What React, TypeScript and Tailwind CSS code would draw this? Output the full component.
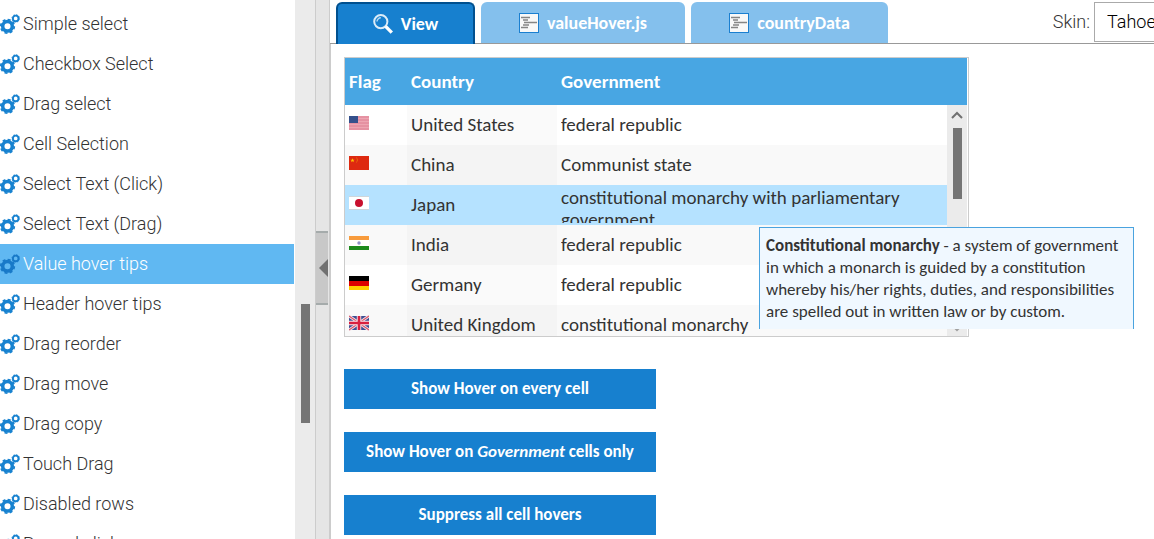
import { clsx } from 'clsx';

const examples = [
  'Simple select',
  'Checkbox Select',
  'Drag select',
  'Cell Selection',
  'Select Text (Click)',
  'Select Text (Drag)',
  'Value hover tips',
  'Header hover tips',
  'Drag reorder',
  'Drag move',
  'Drag copy',
  'Touch Drag',
  'Disabled rows',
  'Record clicks',
];

const countries = [
  { code: 'us', name: 'United States', government: 'federal republic' },
  { code: 'cn', name: 'China', government: 'Communist state' },
  { code: 'jp', name: 'Japan', government: 'constitutional monarchy with parliamentary government' },
  { code: 'in', name: 'India', government: 'federal republic' },
  { code: 'de', name: 'Germany', government: 'federal republic' },
  { code: 'gb', name: 'United Kingdom', government: 'constitutional monarchy' },
];

function GearsIcon({ dim }: { dim?: boolean }) {
  return (
    <svg viewBox="0 0 20 20" className={clsx('h-5 w-5 shrink-0', dim ? 'text-[#1879c8]' : 'text-[#1782d0]')} fill="none" stroke="currentColor" aria-hidden="true">
      <circle cx="7.5" cy="12.3" r="4.8" strokeWidth="3.5" />
      <circle cx="7.5" cy="12.3" r="6.8" strokeWidth="1.7" strokeDasharray="3 2.34" />
      <circle cx="15.7" cy="4.4" r="2.8" strokeWidth="1.9" />
      <circle cx="15.7" cy="4.4" r="3.8" strokeWidth="0.8" strokeDasharray="1.5 1.48" />
    </svg>
  );
}

function SearchIcon() {
  return (
    <svg viewBox="0 0 20 20" className="h-5 w-5" fill="none" stroke="white" aria-hidden="true">
      <circle cx="7.8" cy="7.6" r="6.6" strokeWidth="2" strokeOpacity="0.85" />
      <path d="M4 7.6a3.8 3.8 0 0 1 3.8-3.8" strokeWidth="1.4" strokeOpacity="0.7" />
      <path d="M12.6 12.4l6.2 6.2" strokeWidth="3.4" />
    </svg>
  );
}

function SourceIcon() {
  return (
    <svg viewBox="0 0 20 20" className="h-5 w-5" aria-hidden="true">
      <rect x="0.5" y="0.5" width="19" height="19" fill="#f8f8f8" stroke="#1a7fd0" />
      <path d="M2 4.5h9M4 7h5M5 9.5h13M4 12h6M2 14.5h7" stroke="#858585" strokeWidth="1.4" />
    </svg>
  );
}

function Flag({ code }: { code: string }) {
  return (
    <svg viewBox="0 0 20 16" className="h-4 w-5" role="img" aria-label={code}>
      {code === 'us' && (
        <>
          <rect width="20" height="14" y="1" fill="#eda5b2" />
          <path d="M0 2h20M0 5h20M0 8h20M0 11h20M0 14h20" stroke="#dd7f92" />
          <rect y="1" width="9" height="7" fill="#34508c" />
        </>
      )}
      {code === 'cn' && (
        <>
          <rect width="20" height="14" y="1" fill="#de2910" />
          <path d="M3.5 3.2l.6 1.5h1.5l-1.2 1 .5 1.6-1.4-1-1.4 1 .5-1.6-1.2-1h1.5z" fill="#ffc400" />
          <path d="M7 2.5l1.3 1.2v2.6L7 7.5" fill="none" stroke="#eb7a0c" strokeWidth="0.7" />
        </>
      )}
      {code === 'jp' && (
        <>
          <rect width="20" height="14" y="1" fill="#fff" />
          <path d="M0 1.5h20M0 14.5h20" stroke="#cfd6da" />
          <circle cx="10" cy="8" r="4" fill="#c8102e" />
        </>
      )}
      {code === 'in' && (
        <>
          <rect width="20" height="14" y="1" fill="#fff" />
          <rect width="20" height="4" y="1" fill="#f89b3c" />
          <rect width="20" height="4" y="11" fill="#1d8a1d" />
          <circle cx="10" cy="8" r="1.7" fill="#8f91c9" />
        </>
      )}
      {code === 'de' && (
        <>
          <rect width="20" height="5" y="1" fill="#000" />
          <rect width="20" height="5" y="6" fill="#dd0000" />
          <rect width="20" height="4" y="11" fill="#ffce00" />
        </>
      )}
      {code === 'gb' && (
        <>
          <rect width="20" height="14" y="1" fill="#3f4e92" />
          <path d="M0 1l20 14M20 1L0 15" stroke="#f2e6ec" strokeWidth="3" />
          <path d="M0 1l20 14M20 1L0 15" stroke="#dc5468" strokeWidth="1.1" />
          <path d="M10 1v14M0 8h20" stroke="#f6e8ec" strokeWidth="4.4" />
          <path d="M10 1v14M0 8h20" stroke="#d8203f" strokeWidth="2.6" />
        </>
      )}
    </svg>
  );
}

function Sidebar() {
  return (
    <nav className="flex w-[315px] shrink-0 overflow-hidden font-[Roboto,sans-serif]">
      <ul className="flex-1 pt-1">
        {examples.map((name) => {
          const selected = name === 'Value hover tips';
          return (
            <li key={name}>
              <a
                href="#"
                className={clsx(
                  'flex h-10 items-center gap-[3px] text-lg font-light',
                  selected ? 'bg-[#60b8f2] text-white' : 'text-[#333]',
                )}
              >
                <GearsIcon dim={selected} />
                {name}
              </a>
            </li>
          );
        })}
      </ul>
      <div className="ml-px w-5 bg-[#ebebeb] px-1.5 pt-[304px]">
        <div className="h-[119px] w-[9px] bg-[#757575]" />
      </div>
    </nav>
  );
}

function Splitter() {
  return (
    <div className="flex w-[15px] shrink-0 flex-col border-x border-[#ccc] bg-[#e5e5e5] pt-[231px]">
      <button aria-label="Collapse navigation" className="flex h-[74px] w-3 items-center justify-end border-y-2 border-[#a5abab] bg-[#c8c8c8]">
        <svg viewBox="0 0 9 18" className="h-[18px] w-[9px]" aria-hidden="true">
          <path d="M9 0v18L0 9z" fill="#707070" />
        </svg>
      </button>
    </div>
  );
}

function TabBar() {
  const tab = 'flex items-center justify-center gap-2 rounded-t-md font-bold text-white';
  return (
    <div className="flex h-11 shrink-0 items-start pl-[6px] pt-0.5 shadow-[inset_0_-1px_0_#999]">
      <div role="tablist" className="flex gap-[6px] text-lg">
        <button role="tab" aria-selected="true" className={clsx(tab, 'h-[42px] w-[139px] border-2 border-b-0 border-[#00508f] bg-[#1780cf]')}>
          <SearchIcon />
          View
        </button>
        <button role="tab" aria-selected="false" className={clsx(tab, 'h-[41px] w-[204px] bg-[#84c0ed]')}>
          <SourceIcon />
          valueHover.js
        </button>
        <button role="tab" aria-selected="false" className={clsx(tab, 'h-[41px] w-[197px] bg-[#84c0ed]')}>
          <SourceIcon />
          countryData
        </button>
      </div>
      <div className="-mr-16 ml-auto flex shrink-0 items-center gap-1 font-[Roboto,sans-serif] text-lg font-light text-[#333]">
        <label htmlFor="skin">Skin:</label>
        <select id="skin" className="h-10 w-[124px] appearance-none border border-[#aaa] bg-white px-3 text-black">
          <option>Tahoe</option>
        </select>
      </div>
    </div>
  );
}

function CountryGrid() {
  return (
    <div className="relative w-[625px]">
      <div className="h-[280px] overflow-hidden border border-[#ccc] pr-px">
        <table className="w-full table-fixed border-collapse text-left text-[19px]">
          <colgroup>
            <col className="w-[62px]" />
            <col className="w-[150px]" />
            <col />
          </colgroup>
          <thead className="bg-[#48a6e3] text-white">
            <tr className="h-[47px]">
              <th className="px-1 pt-0.5">Flag</th>
              <th className="px-1 pt-0.5">Country</th>
              <th className="px-1 pt-0.5">Government</th>
            </tr>
          </thead>
          <tbody className="text-[#333]">
            {countries.map(({ code, name, government }, i) => {
              const hovered = code === 'jp';
              const even = i % 2 === 1;
              return (
                <tr key={code} className={clsx('h-10 leading-[22px]', hovered ? 'bg-[#b5e2ff]' : even ? 'bg-[#f9f9f9]' : 'bg-white')}>
                  <td className="px-1 pb-1">
                    <Flag code={code} />
                  </td>
                  <td className={clsx('px-1', !hovered && (even ? 'bg-[#f4f4f4]' : 'bg-[#fafafa]'))}>{name}</td>
                  <td className="py-0.5 pl-1 pr-10">
                    <div className="max-h-9 overflow-hidden">{government}</div>
                  </td>
                </tr>
              );
            })}
          </tbody>
        </table>
      </div>

      {/* Scrollbar */}
      <div className="absolute bottom-px right-0.5 top-12 flex w-5 flex-col items-center bg-[#ebebeb] pb-1 pt-1.5">
        <svg viewBox="0 0 12 8" className="h-2 w-3" fill="none" stroke="#707070" strokeWidth="2" aria-hidden="true">
          <path d="M1 7l5-5 5 5" />
        </svg>
        <div className="mb-auto mt-[9px] h-[71px] w-[9px] bg-[#757575]" />
        <svg viewBox="0 0 12 8" className="h-2 w-3" fill="none" stroke="#a0a0a0" strokeWidth="2" aria-hidden="true">
          <path d="M1 1l5 5 5-5" />
        </svg>
      </div>

      {/* Hover tip */}
      <div role="tooltip" className="absolute left-[415px] top-[170px] h-[102px] w-[375px] overflow-hidden border border-b-0 border-[#4aa3df] bg-[#f0f8ff] px-1.5 pt-[7px] text-[17px] leading-[22px] text-[#333]">
        <b>Constitutional monarchy</b> - a system of government in which a monarch is guided by a constitution whereby
        his/her rights, duties, and responsibilities are spelled out in written law or by custom.
      </div>
    </div>
  );
}

export default function App() {
  const action = 'h-10 w-[312px] bg-[#1780cf] text-[17px] font-semibold text-white';
  return (
    <div className="flex h-screen overflow-hidden bg-white font-[Carlito,Lato,sans-serif]">
      <Sidebar />
      <Splitter />
      <main className="flex min-w-0 flex-1 flex-col overflow-hidden">
        <TabBar />
        <div className="flex-1 border-l border-[#ccc] px-[13px] pt-[13px]">
          <CountryGrid />
          <div className="mt-8 flex flex-col items-start gap-[23px]">
            <button className={action}>Show Hover on every cell</button>
            <button className={action}>
              Show Hover on <i>Government</i> cells only
            </button>
            <button className={action}>Suppress all cell hovers</button>
          </div>
        </div>
      </main>
    </div>
  );
}
